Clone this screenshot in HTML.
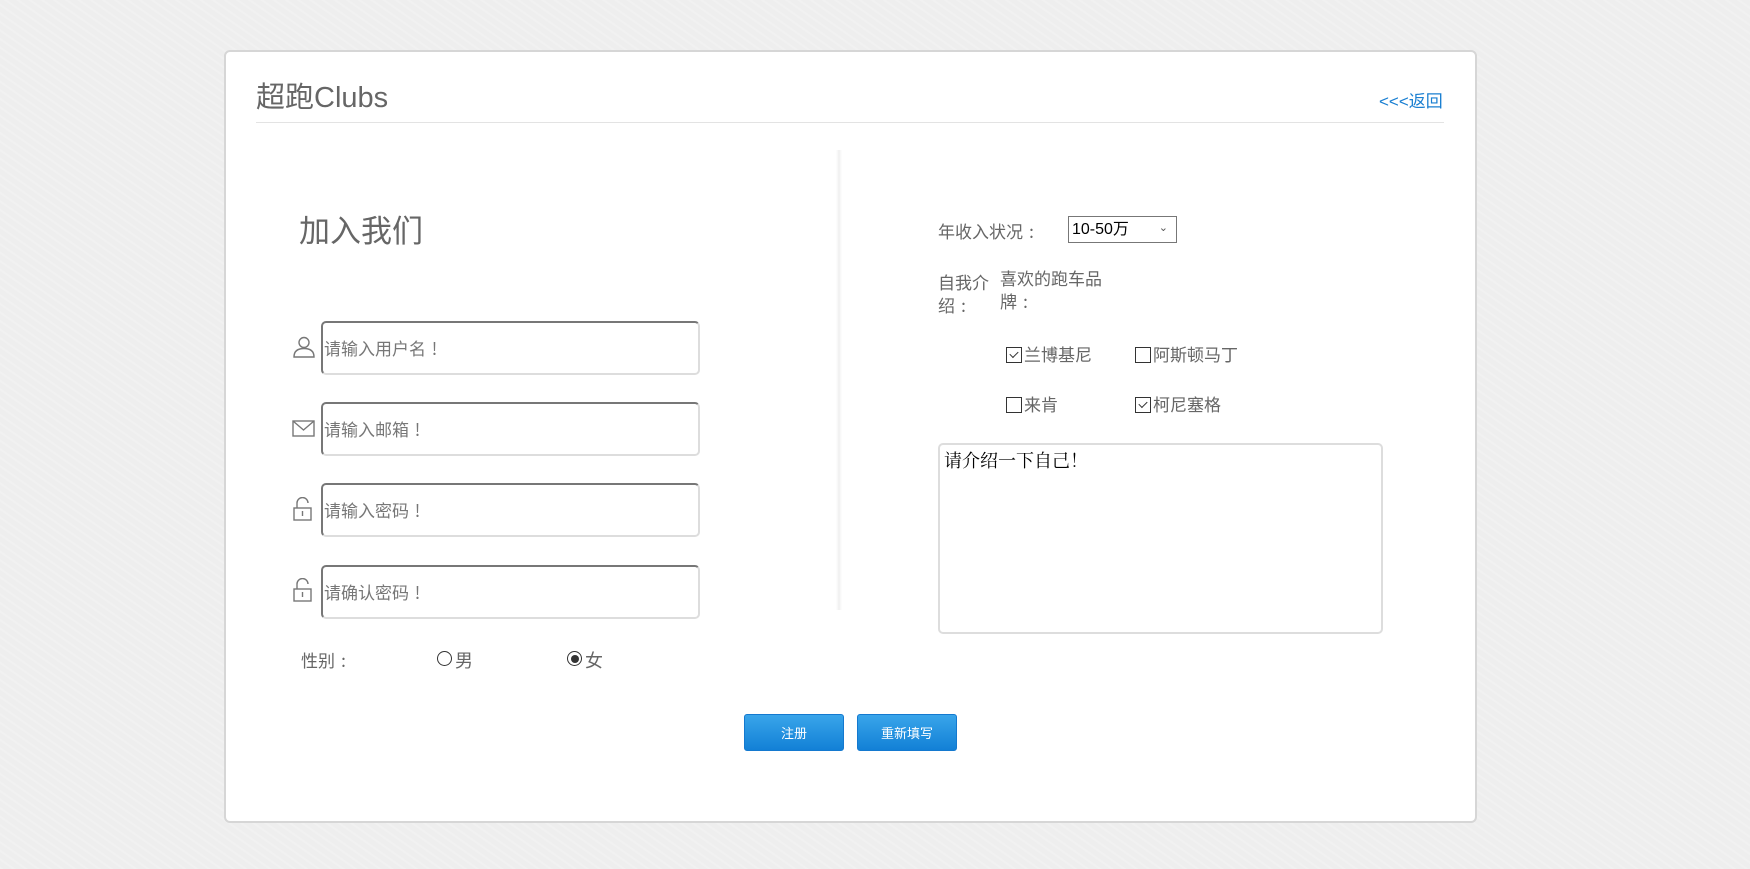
<!DOCTYPE html>
<html><head><meta charset="utf-8"><style>
body{margin:0;width:1750px;height:869px;overflow:hidden;background:#eeeeee;background-image:repeating-linear-gradient(35deg,rgba(255,255,255,.18) 0 2px,transparent 2px 7px);font-family:"Liberation Sans","Noto Sans CJK SC",sans-serif;color:#666;position:relative}
.a{position:absolute;white-space:nowrap}
.z{font-family:"Noto Sans CJK SC",sans-serif}
.card{position:absolute;left:224px;top:50px;width:1249px;height:769px;background:#fff;border:2px solid #d6d6d6;border-radius:6px}
.inp{position:absolute;left:321px;width:374px;height:50px;border:2px solid #ddd;border-top-color:#777;border-left-color:#777;border-radius:5px;font-size:17px;color:#777;line-height:50px;padding-left:1px;box-sizing:content-box}
.lbl{font-size:17px;color:#666}
.col{display:inline-block;width:17px;text-align:center}
.cb{display:inline-block;width:14px;height:14px;border:1px solid #333;vertical-align:-2px;margin-right:2px;position:relative}
.cb.c::after{content:"";position:absolute;left:3px;width:7px;height:4px;border-left:1.5px solid #333;border-bottom:1.5px solid #333;transform:rotate(-45deg);top:3px}
.btn{position:absolute;top:714px;height:37px;border-radius:3px;background:linear-gradient(#39a5ea,#1280d6);border:1px solid #1479cf;color:#fff;font-size:13px;text-align:center;line-height:37px;box-sizing:border-box}
</style></head><body>
<div class="card"></div>
<div class="a" style="left:256px;top:74px;font-size:29px;color:#666">超跑Clubs</div>
<div class="a" style="left:1379px;top:87px;font-size:17px;color:#1a7fd1">&lt;&lt;&lt;返回</div>
<div class="a" style="left:256px;top:122px;width:1188px;height:1px;background:#e3e3e3"></div>
<div class="a" style="left:836px;top:150px;width:6px;height:460px;background:linear-gradient(90deg,#fff,#f0f0f0 50%,#fff)"></div>
<div class="a" style="left:299px;top:206px;font-size:31px;color:#666">加入我们</div>

<svg class="a" style="left:292px;top:336px" width="24" height="22" viewBox="0 0 24 22" fill="none" stroke="#777" stroke-width="1.4"><circle cx="12" cy="6.5" r="5"/><path d="M2 21c0-6 4-8.5 10-8.5s10 2.5 10 8.5z"/></svg>
<div class="inp z" style="top:321px">请输入用户名<span class="col">!</span></div>
<svg class="a" style="left:292px;top:420px" width="24" height="18" viewBox="0 0 24 18" fill="none" stroke="#777" stroke-width="1.4"><rect x="1" y="1" width="21" height="15"/><path d="M1 1l10.5 9L22 1"/></svg>
<div class="inp z" style="top:402px">请输入邮箱<span class="col">!</span></div>
<svg class="a" style="left:293px;top:497px" width="20" height="24" viewBox="0 0 20 24" fill="none" stroke="#777" stroke-width="1.4"><path d="M4 11V6a5.5 5.5 0 0 1 11 0"/><rect x="1" y="11" width="17" height="12"/><path d="M9.5 14v5"/></svg>
<div class="inp z" style="top:483px">请输入密码<span class="col">!</span></div>
<svg class="a" style="left:293px;top:578px" width="20" height="24" viewBox="0 0 20 24" fill="none" stroke="#777" stroke-width="1.4"><path d="M4 11V6a5.5 5.5 0 0 1 11 0"/><rect x="1" y="11" width="17" height="12"/><path d="M9.5 14v5"/></svg>
<div class="inp z" style="top:565px">请确认密码<span class="col">!</span></div>

<div class="a lbl z" style="left:301px;top:647px">性别<span class="col">:</span></div>
<div class="a" style="left:437px;top:651px;width:13px;height:13px;border:1.5px solid #333;border-radius:50%"></div>
<div class="a lbl" style="left:455px;top:647px;font-size:18px">男</div>
<div class="a" style="left:567px;top:651px;width:13px;height:13px;border:1.5px solid #333;border-radius:50%"></div>
<div class="a" style="left:571px;top:655px;width:8px;height:8px;background:#333;border-radius:50%"></div>
<div class="a lbl" style="left:585px;top:647px;font-size:18px">女</div>

<div class="a lbl z" style="left:938px;top:218px">年收入状况<span class="col">:</span></div>
<div class="a" style="left:1068px;top:216px;width:109px;height:27px;border:1px solid #777;box-sizing:border-box;font-size:16px;color:#000;line-height:25px;padding-left:3px">10-50万<span style="position:absolute;right:8px;top:-1px;font-size:11px;color:#555">&#8964;</span></div>
<div class="a lbl z" style="left:938px;top:270px;line-height:23px">自我介<br>绍<span class="col">:</span></div>
<div class="a lbl z" style="left:1000px;top:266px;line-height:23px">喜欢的跑车品<br>牌<span class="col">:</span></div>

<div class="a lbl" style="left:1006px;top:341px;font-size:17px"><span class="cb c"></span>兰博基尼</div>
<div class="a lbl" style="left:1135px;top:341px;font-size:17px"><span class="cb"></span>阿斯顿马丁</div>
<div class="a lbl" style="left:1006px;top:391px;font-size:17px"><span class="cb"></span>来肯</div>
<div class="a lbl" style="left:1135px;top:391px;font-size:17px"><span class="cb c"></span>柯尼塞格</div>

<div class="a" style="left:938px;top:443px;width:445px;height:191px;border:2px solid #ddd;border-radius:5px;box-sizing:border-box;font-family:'Liberation Serif','Noto Serif CJK SC',serif;font-size:18px;color:#000;padding:2px 4px">请介绍一下自己！</div>

<div class="btn" style="left:744px;width:100px">注册</div>
<div class="btn" style="left:857px;width:100px">重新填写</div>
</body></html>
